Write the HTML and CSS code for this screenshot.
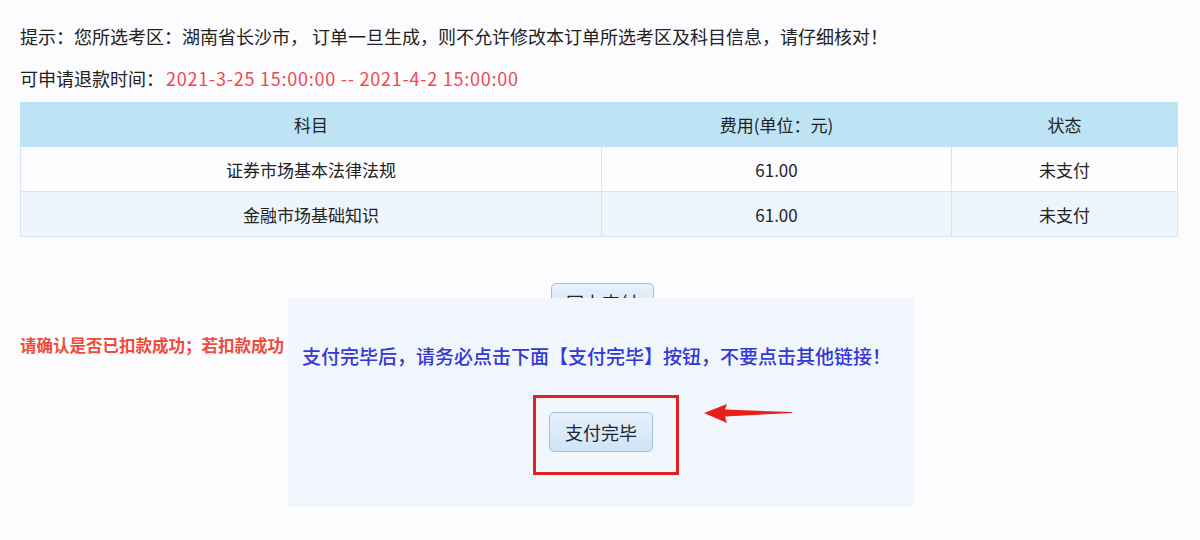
FILE: index.html
```html
<!DOCTYPE html>
<html lang="zh-CN">
<head>
<meta charset="utf-8">
<title>支付</title>
<link rel="stylesheet" href="styles.css">
</head>
<body>
<div class="page">
  <div class="notice">
    <p class="line">提示：您所选考区：湖南省长沙市， 订单一旦生成，则不允许修改本订单所选考区及科目信息，请仔细核对！</p>
    <p class="line">可申请退款时间：<span class="date">2021-3-25 15:00:00 -- 2021-4-2 15:00:00</span></p>
  </div>
  <table class="orders">
    <colgroup>
      <col class="c1"><col class="c2"><col class="c3">
    </colgroup>
    <thead>
      <tr><th>科目</th><th>费用(单位：元)</th><th>状态</th></tr>
    </thead>
    <tbody>
      <tr class="odd"><td>证券市场基本法律法规</td><td>61.00</td><td>未支付</td></tr>
      <tr class="even"><td>金融市场基础知识</td><td>61.00</td><td>未支付</td></tr>
    </tbody>
  </table>
  <div class="pay-row"><button class="btn pay">网上支付</button></div>
  <p class="warn">请确认是否已扣款成功；若扣款成功</p>

  <div class="modal">
    <p class="modal-text">支付完毕后，请务必点击下面【支付完毕】按钮，不要点击其他链接！</p>
    <div class="frame">
      <button class="btn done">支付完毕</button>
      <svg class="arrow" width="90" height="22" viewBox="0 0 90 22">
        <path d="M0 10 L23 1 L21 6.5 L88 9 L88 10 L21 13.5 L23 20 Z" fill="#e8201c"/>
      </svg>
    </div>
  </div>
</div>
</body>
</html>
```
FILE: styles.css
```css
html, body {
  margin: 0;
  padding: 0;
  background: #fcfcfe;
}
body {
  width: 1200px;
  height: 540px;
  overflow: hidden;
  font-family: "Noto Sans CJK SC", "Noto Sans", sans-serif;
  color: #222;
}
.page {
  position: relative;
  height: 540px;
  padding: 0 23px 0 20px;
  overflow: hidden;
}
.notice {
  padding-top: 15px;
}
.line {
  margin: 0;
  font-size: 18px;
  line-height: 42px;
  white-space: nowrap;
}
.date {
  color: #ee4a4f;
  margin-left: 2px;
  letter-spacing: 0.75px;
}
.orders {
  margin-top: 3px;
  width: 1157px;
  border-collapse: collapse;
  table-layout: fixed;
  font-size: 17px;
}
.c1 { width: 581px; }
.c2 { width: 350px; }
.c3 { width: 226px; }
.orders th {
  background: #bde3f5;
  font-weight: normal;
  height: 43px;
  padding: 0;
  border: 1px solid #bde3f5;
  color: #222;
}
.orders td {
  height: 44px;
  padding: 0;
  text-align: center;
  border: 1px solid #d5e6f2;
  color: #222;
}
.orders .odd td { background: #fdfdff; }
.orders .even td { background: #eef5fd; }
.pay-row {
  display: flex;
  justify-content: center;
  padding-left: 7px;
  margin-top: 46px;
}
.btn {
  font-family: "Noto Sans CJK SC", "Noto Sans", sans-serif;
  font-size: 18px;
  color: #1e2430;
  background: linear-gradient(#e6f1fb, #cfe4f6);
  border: 1px solid #9cc3df;
  border-radius: 5px;
  cursor: pointer;
}
.pay {
  width: 103px;
  height: 38px;
}
.warn {
  margin: 9px 0 0;
  font-size: 16.5px;
  line-height: 30px;
  color: #f04a3a;
  font-weight: bold;
  white-space: nowrap;
}
.modal {
  position: absolute;
  left: 288px;
  top: 298px;
  width: 625px;
  height: 209px;
  background: #f1f6fc;
  box-sizing: border-box;
  padding-top: 43px;
}
.modal-text {
  margin: 0;
  text-align: center;
  font-size: 19px;
  line-height: 30px;
  color: #3438d6;
  font-weight: 500;
  padding-right: 8px;
  white-space: nowrap;
}
.frame {
  position: relative;
  margin: 24px 0 0 245px;
  width: 140px;
  height: 74px;
  border: 3px solid #e3201f;
  box-sizing: content-box;
}
.done {
  position: relative;
  margin: 14px 0 0 13px;
  width: 104px;
  height: 40px;
  display: block;
}
.arrow {
  position: absolute;
  left: 168px;
  top: 5px;
}
```
